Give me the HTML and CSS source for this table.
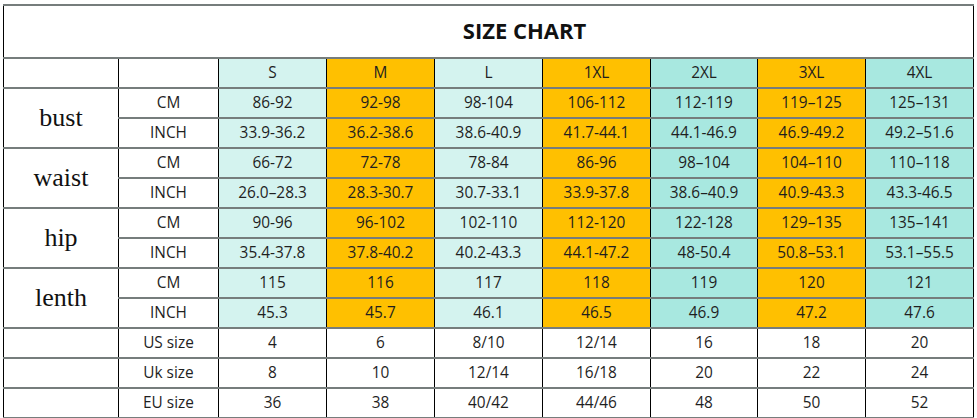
FILE: index.html
```html
<!DOCTYPE html>
<html>
<head>
<meta charset="utf-8">
<link rel="stylesheet" href="styles.css">
</head>
<body>
<table class="chart">
  <colgroup>
    <col class="c-label"><col class="c-unit">
    <col class="c-size"><col class="c-size"><col class="c-size"><col class="c-size">
    <col class="c-size-n"><col class="c-size"><col class="c-size">
  </colgroup>
  <tr class="title-row"><td colspan="9" class="title">SIZE CHART</td></tr>
  <tr>
    <td></td><td></td>
    <td class="lc">S</td><td class="og">M</td><td class="lc">L</td><td class="og">1XL</td><td class="dc">2XL</td><td class="og">3XL</td><td class="dc">4XL</td>
  </tr>
  <tr>
    <td rowspan="2" class="label">bust</td><td>CM</td>
    <td class="lc">86-92</td><td class="og">92-98</td><td class="lc">98-104</td><td class="og">106-112</td><td class="dc">112-119</td><td class="og">119–125</td><td class="dc">125–131</td>
  </tr>
  <tr>
    <td>INCH</td>
    <td class="lc">33.9-36.2</td><td class="og">36.2-38.6</td><td class="lc">38.6-40.9</td><td class="og">41.7-44.1</td><td class="dc">44.1-46.9</td><td class="og">46.9-49.2</td><td class="dc">49.2–51.6</td>
  </tr>
  <tr>
    <td rowspan="2" class="label">waist</td><td>CM</td>
    <td class="lc">66-72</td><td class="og">72-78</td><td class="lc">78-84</td><td class="og">86-96</td><td class="dc">98–104</td><td class="og">104–110</td><td class="dc">110–118</td>
  </tr>
  <tr>
    <td>INCH</td>
    <td class="lc">26.0–28.3</td><td class="og">28.3-30.7</td><td class="lc">30.7-33.1</td><td class="og">33.9-37.8</td><td class="dc">38.6–40.9</td><td class="og">40.9-43.3</td><td class="dc">43.3-46.5</td>
  </tr>
  <tr>
    <td rowspan="2" class="label">hip</td><td>CM</td>
    <td class="lc">90-96</td><td class="og">96-102</td><td class="lc">102-110</td><td class="og">112-120</td><td class="dc">122-128</td><td class="og">129–135</td><td class="dc">135–141</td>
  </tr>
  <tr>
    <td>INCH</td>
    <td class="lc">35.4-37.8</td><td class="og">37.8-40.2</td><td class="lc">40.2-43.3</td><td class="og">44.1-47.2</td><td class="dc">48-50.4</td><td class="og">50.8–53.1</td><td class="dc">53.1–55.5</td>
  </tr>
  <tr>
    <td rowspan="2" class="label">lenth</td><td>CM</td>
    <td class="lc">115</td><td class="og">116</td><td class="lc">117</td><td class="og">118</td><td class="dc">119</td><td class="og">120</td><td class="dc">121</td>
  </tr>
  <tr>
    <td>INCH</td>
    <td class="lc">45.3</td><td class="og">45.7</td><td class="lc">46.1</td><td class="og">46.5</td><td class="dc">46.9</td><td class="og">47.2</td><td class="dc">47.6</td>
  </tr>
  <tr>
    <td></td><td>US size</td>
    <td>4</td><td>6</td><td>8/10</td><td>12/14</td><td>16</td><td>18</td><td>20</td>
  </tr>
  <tr>
    <td></td><td>Uk size</td>
    <td>8</td><td>10</td><td>12/14</td><td>16/18</td><td>20</td><td>22</td><td>24</td>
  </tr>
  <tr>
    <td></td><td>EU size</td>
    <td>36</td><td>38</td><td>40/42</td><td>44/46</td><td>48</td><td>50</td><td>52</td>
  </tr>
</table>
</body>
</html>
```

FILE: styles.css
```css
html, body {
  margin: 0;
  padding: 0;
  background: #ffffff;
}

body {
  padding: 4px 0 0 3px;
}

.chart {
  border-collapse: collapse;
  table-layout: fixed;
  width: 971px;
  font-family: "Open Sans", "Noto Sans", sans-serif;
  font-size: 15.4px;
  color: #1f1f1f;
}

.c-label { width: 115px; }
.c-unit { width: 100px; }
.c-size { width: 108px; }
.c-size-n { width: 107px; }

.chart td {
  border-top: 2px solid #767d7c;
  border-bottom: 2px solid #767d7c;
  border-left: 1px solid #000000;
  border-right: 1px solid #000000;
  text-align: center;
  vertical-align: middle;
  padding: 0;
  height: 28px;
  line-height: 20px;
  white-space: nowrap;
}

.chart .title {
  height: 48px;
  padding-bottom: 3px;
  font-weight: 700;
  font-size: 22px;
  color: #111111;
  padding-left: 72px;
}

.chart .label {
  font-family: "Liberation Serif", "Times New Roman", serif;
  font-size: 26px;
  color: #111111;
}

.lc { background: #d4f3ef; }
.dc { background: #a8e8e0; }
.og { background: #ffc000; }
```
